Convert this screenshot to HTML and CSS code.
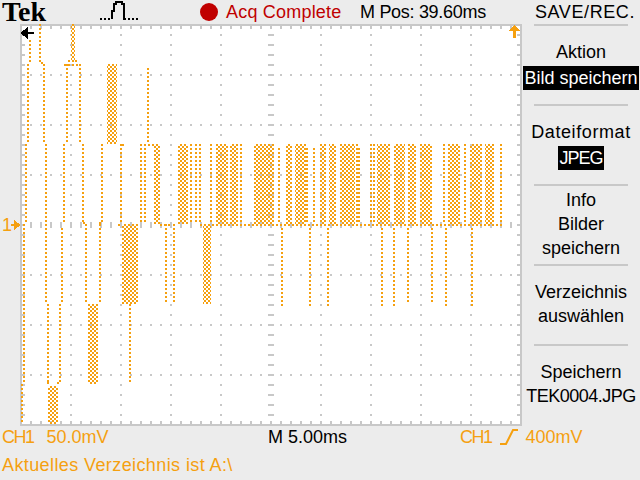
FILE: index.html
```html
<!DOCTYPE html>
<html lang="en">
<head>
    <meta charset="UTF-8">
    <title>Tek SAVE/REC.</title>
    <link rel="stylesheet" href="styles.css">
</head>
<body>
<div class="scope">
    <div class="topbar">
        <span class="logo">Tek</span>
        <svg class="pulse" width="38" height="22" viewBox="0 0 38 22">
            <path d="M0 18h2M4 18h2M8 18h2M12 18V10h2V3h2V1h6v2h2v15h2M28 18h2M32 18h2M36 18h2" fill="none" stroke="#000" stroke-width="2"/>
        </svg>
        <span class="led"></span>
        <span class="acq">Acq Complete</span>
        <span class="mpos">M Pos: 39.60ms</span>
        <span class="title">SAVE/REC.</span>
    </div>

    <div class="main">
        <div class="plot">
            <span class="ch-marker">1</span>
            <svg width="522" height="402" viewBox="0 24 522 402">
                <defs>
                    <pattern id="gridDots" patternUnits="userSpaceOnUse" x="20" y="24" width="50" height="50">
                        <path d="M0 0h2v2H0zM0 10h2v2H0zM0 20h2v2H0zM0 30h2v2H0zM0 40h2v2H0zM10 0h2v2h-2zM20 0h2v2h-2zM30 0h2v2h-2zM40 0h2v2h-2z" fill="#c8c8c8"/>
                    </pattern>
                    <pattern id="tickX" patternUnits="userSpaceOnUse" x="20" y="0" width="10" height="10">
                        <rect width="2" height="10" fill="#c8c8c8"/>
                    </pattern>
                    <pattern id="tickY" patternUnits="userSpaceOnUse" x="0" y="24" width="10" height="10">
                        <rect width="10" height="2" fill="#c8c8c8"/>
                    </pattern>
                    <pattern id="dash" patternUnits="userSpaceOnUse" x="0" y="0" width="4" height="4">
                        <rect width="4" height="2" fill="#f5a010"/>
                    </pattern>
                    <pattern id="dashH" patternUnits="userSpaceOnUse" x="0" y="0" width="4" height="4">
                        <rect width="2" height="4" fill="#f5a010"/>
                    </pattern>
                    <pattern id="check" patternUnits="userSpaceOnUse" x="0" y="0" width="4" height="4">
                        <path d="M0 0h2v2H0zM2 2h2v2H2z" fill="#f5a010"/>
                    </pattern>
                </defs>

                <!-- graticule -->
                <rect x="20" y="24" width="502" height="402" fill="#fff"/>
                <rect x="20" y="24" width="500" height="400" fill="url(#gridDots)"/>
                <rect x="22" y="26" width="498" height="3" fill="url(#tickX)"/>
                <rect x="22" y="421" width="498" height="3" fill="url(#tickX)"/>
                <rect x="22" y="222" width="498" height="6" fill="url(#tickX)"/>
                <rect x="22" y="26" width="3" height="398" fill="url(#tickY)"/>
                <rect x="517" y="26" width="3" height="398" fill="url(#tickY)"/>
                <rect x="268" y="26" width="6" height="398" fill="url(#tickY)"/>
                <path d="M20 24h502v2H20zM20 424h502v2H20zM20 24h2v402h-2zM520 24h2v402h-2z" fill="#c8c8c8"/>

                <!-- single traces -->
                <g fill="url(#dash)">
                    <rect x="29" y="40" width="2" height="24"/>
                    <rect x="27" y="64" width="2" height="80"/>
                    <rect x="25" y="144" width="2" height="80"/>
                    <rect x="23" y="224" width="2" height="160"/>
                    <rect x="21" y="384" width="2" height="40"/>
                    <rect x="39" y="24" width="2" height="40"/>
                    <rect x="43" y="64" width="2" height="80"/>
                    <rect x="45" y="144" width="2" height="160"/>
                    <rect x="47" y="304" width="2" height="80"/>
                    <rect x="66" y="64" width="2" height="80"/>
                    <rect x="79" y="64" width="2" height="80"/>
                    <rect x="63" y="144" width="2" height="80"/>
                    <rect x="61" y="228" width="2" height="76"/>
                    <rect x="59" y="304" width="2" height="80"/>
                    <rect x="82" y="144" width="2" height="80"/>
                    <rect x="85" y="224" width="2" height="80"/>
                    <rect x="101" y="144" width="2" height="80"/>
                    <rect x="99" y="224" width="2" height="80"/>
                    <rect x="120" y="144" width="2" height="80"/>
                    <rect x="129" y="304" width="2" height="80"/>
                    <rect x="147" y="66" width="2" height="78"/>
                    <rect x="140" y="144" width="2" height="80"/>
                    <rect x="144" y="144" width="2" height="80"/>
                    <rect x="165" y="224" width="2" height="80"/>
                    <rect x="173" y="224" width="2" height="80"/>
                    <rect x="190" y="144" width="2" height="80"/>
                    <rect x="195" y="144" width="2" height="80"/>
                    <rect x="199" y="144" width="2" height="80"/>
                    <rect x="210" y="144" width="2" height="80"/>
                    <rect x="240" y="144" width="2" height="80"/>
                    <rect x="278" y="146" width="2" height="78"/>
                    <rect x="306" y="146" width="2" height="78"/>
                    <rect x="313" y="146" width="2" height="78"/>
                    <rect x="356" y="144" width="2" height="80"/>
                    <rect x="358" y="146" width="2" height="78"/>
                    <rect x="370" y="144" width="2" height="80"/>
                    <rect x="373" y="144" width="2" height="80"/>
                    <rect x="443" y="144" width="2" height="80"/>
                    <rect x="464" y="144" width="2" height="80"/>
                    <rect x="500" y="144" width="2" height="80"/>
                    <rect x="281" y="226" width="2" height="80"/>
                    <rect x="309" y="226" width="2" height="80"/>
                    <rect x="327" y="226" width="2" height="80"/>
                    <rect x="381" y="226" width="2" height="80"/>
                    <rect x="393" y="226" width="2" height="80"/>
                    <rect x="407" y="226" width="2" height="78"/>
                    <rect x="431" y="226" width="2" height="78"/>
                    <rect x="445" y="226" width="2" height="80"/>
                    <rect x="471" y="226" width="2" height="80"/>
                </g>

                <!-- dense bursts -->
                <g fill="url(#check)">
                    <rect x="71" y="24" width="4" height="38"/>
                    <rect x="107" y="64" width="10" height="80"/>
                    <rect x="48" y="386" width="10" height="38"/>
                    <rect x="88" y="304" width="10" height="80"/>
                    <rect x="122" y="224" width="16" height="80"/>
                    <rect x="203" y="224" width="8" height="80"/>
                    <rect x="154" y="144" width="6" height="80"/>
                    <rect x="178" y="144" width="10" height="80"/>
                    <rect x="216" y="144" width="12" height="80"/>
                    <rect x="230" y="144" width="8" height="80"/>
                    <rect x="254" y="144" width="20" height="80"/>
                    <rect x="286" y="144" width="6" height="80"/>
                    <rect x="295" y="144" width="11" height="80"/>
                    <rect x="320" y="144" width="6" height="80"/>
                    <rect x="329" y="144" width="7" height="80"/>
                    <rect x="340" y="144" width="15" height="80"/>
                    <rect x="377" y="144" width="13" height="80"/>
                    <rect x="394" y="144" width="11" height="80"/>
                    <rect x="408" y="144" width="8" height="80"/>
                    <rect x="420" y="144" width="12" height="80"/>
                    <rect x="448" y="144" width="12" height="80"/>
                    <rect x="470" y="144" width="12" height="80"/>
                    <rect x="485" y="144" width="9" height="80"/>
                </g>

                <!-- baseline and short steps between levels -->
                <g fill="url(#dashH)">
                    <rect x="212" y="224" width="290" height="2"/>
                    <rect x="160" y="224" width="12" height="2"/>
                    <rect x="200" y="224" width="12" height="2"/>
                    <rect x="140" y="144" width="14" height="2"/>
                    <rect x="64" y="64" width="16" height="2"/>
                </g>
                <path d="M41 62h2v2h-2zM68 60h2v2h-2zM75 60h2v2h-2zM49 384h-2v-2h2zM57 384h2v-2h-2zM118 224h2v2h-2zM122 144h2v2h-2zM83 222h2v2h-2zM99 222h2v2h-2z" fill="#f5a010"/>

                <!-- horizontal position and trigger markers -->
                <path d="M20 33l8-6v5h6v2h-6v5z" fill="#000"/>
                <path d="M514 25l6 6h-4v7h-3v-7h-5z" fill="#f5a010"/>
                <path d="M21 225l-7-5v4h-3v2h3v4z" fill="#f5a010"/>
            </svg>
        </div>

        <div class="menu">
            <div class="menu-item">
                <span>Aktion</span>
                <span class="selected">Bild speichern</span>
            </div>
            <div class="menu-item">
                <span class="wide">Dateiformat</span>
                <span class="selected tight">JPEG</span>
            </div>
            <div class="menu-item">
                <span>Info</span>
                <span>Bilder</span>
                <span>speichern</span>
            </div>
            <div class="menu-item">
                <span>Verzeichnis</span>
                <span>auswählen</span>
            </div>
            <div class="menu-item">
                <span>Speichern</span>
                <span class="tight">TEK0004.JPG</span>
            </div>
        </div>
    </div>

    <div class="readout">
        <div class="ch-scale"><span class="ch-name">CH1</span><span>50.0mV</span></div>
        <div class="timebase">M 5.00ms</div>
        <div class="trigger">
            <span class="ch-name">CH1</span>
            <svg width="20" height="18" viewBox="0 0 20 18">
                <path d="M1 16h6L14 2h5" fill="none" stroke="#f5a010" stroke-width="2"/>
            </svg>
            <span>400mV</span>
        </div>
    </div>
    <div class="message">Aktuelles Verzeichnis ist A:\</div>
</div>
</body>
</html>
```

FILE: styles.css
```css
body {
    margin: 0;
    background-color: #ececec;
    font-family: "Liberation Sans", Arial, sans-serif;
    font-size: 18px;
    color: #000;
    overflow: hidden;
}

.scope {
    width: 640px;
    height: 480px;
    display: flex;
    flex-direction: column;
}

/* top status line */
.topbar {
    height: 24px;
    display: flex;
    align-items: center;
}
.logo {
    width: 98px;
    padding-left: 2px;
    box-sizing: border-box;
    font-family: "Liberation Serif", serif;
    font-weight: bold;
    font-size: 28px;
    line-height: 26px;
}
.pulse {
    margin-left: 2px;
    margin-right: 62px;
}
.led {
    width: 18px;
    height: 18px;
    border-radius: 50%;
    background-color: #c00000;
    margin-right: 8px;
}
.acq {
    width: 134px;
    color: #c00000;
    letter-spacing: .2px;
}
.mpos {
    width: 170px;
    letter-spacing: -.3px;
}
.title {
    flex: 1;
    text-align: center;
    letter-spacing: .6px;
    padding-top: 1px;
}

/* graticule and soft menu */
.main {
    height: 402px;
    display: flex;
}
.plot {
    position: relative;
    width: 522px;
    height: 402px;
}
.plot svg {
    display: block;
    shape-rendering: crispEdges;
}
.ch-marker {
    position: absolute;
    left: 2px;
    top: 190px;
    color: #f5a010;
    line-height: 22px;
}
.menu {
    flex: 1;
    display: flex;
    flex-direction: column;
}
.menu-item {
    height: 80px;
    box-sizing: border-box;
    display: flex;
    flex-direction: column;
    align-items: center;
    justify-content: center;
    line-height: 24px;
    position: relative;
}
.menu-item:before {
    content: "";
    position: absolute;
    left: 12px;
    right: 12px;
    top: 0;
    height: 2px;
    background-color: #c8c8c8;
}
.selected {
    background-color: #000;
    color: #fff;
    padding: 0 1px;
    margin-top: 2px;
    margin-bottom: -2px;
}
.wide {
    letter-spacing: .6px;
}
.tight {
    letter-spacing: -.5px;
}
.selected.tight {
    letter-spacing: -1px;
}

/* bottom readouts */
.readout {
    height: 22px;
    display: grid;
    grid-template-columns: 268px 192px 1fr;
    align-items: center;
    color: #f5a010;
}
.ch-scale {
    display: flex;
    gap: 13px;
    padding-left: 2px;
}
.ch-name {
    letter-spacing: -1.5px;
}
.timebase {
    color: #000;
}
.trigger {
    display: flex;
    align-items: center;
    gap: 7px;
}
.message {
    height: 32px;
    box-sizing: border-box;
    padding-top: 1px;
    padding-left: 2px;
    line-height: 32px;
    letter-spacing: .4px;
    color: #f5a010;
}
```
